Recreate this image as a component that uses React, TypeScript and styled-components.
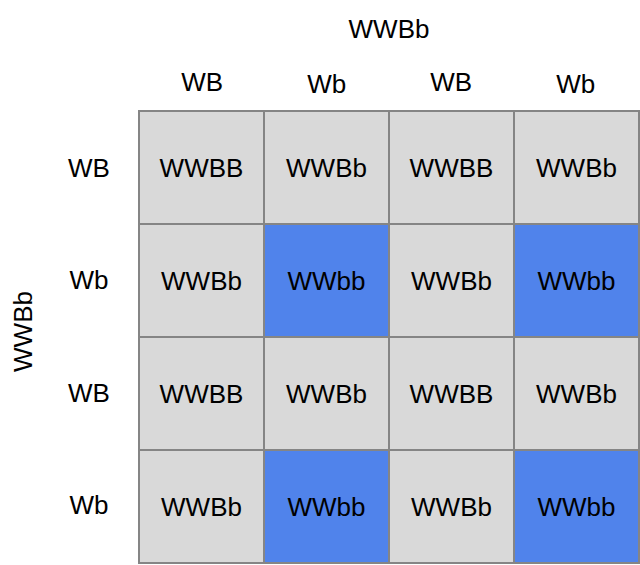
import React from 'react';
import { createGlobalStyle, styled } from 'styled-components';

const GlobalStyle = createGlobalStyle`
  html, body {
    margin: 0;
    padding: 0;
    background: #ffffff;
  }
  body {
    font-family: 'Liberation Sans', Arial, sans-serif;
    color: #000000;
  }
`;

const colAlleles = ['WB', 'Wb', 'WB', 'Wb'];
const rowAlleles = ['WB', 'Wb', 'WB', 'Wb'];

const combine = (a: string, b: string) => {
  const w = [a[0], b[0]].sort().join('');
  const bb = [a[1], b[1]].sort().join('');
  return w + bb;
};

export default function App() {
  return (
    <>
      <GlobalStyle />
      <Page>
        <SideLabel>
          <Rotated>WWBb</Rotated>
        </SideLabel>
        <Square>
          <TopLabel>WWBb</TopLabel>
          <ColHeaders>
            {colAlleles.map((c, i) => (
              <ColHeader key={i} lower={c === 'Wb'}>
                {c}
              </ColHeader>
            ))}
          </ColHeaders>
          <RowHeaders>
            {rowAlleles.map((r, i) => (
              <RowHeader key={i}>{r}</RowHeader>
            ))}
          </RowHeaders>
          <Board>
            {rowAlleles.map((r, ri) =>
              colAlleles.map((c, ci) => {
                const g = combine(r, c);
                return (
                  <Cell key={`${ri}-${ci}`} recessive={g === 'WWbb'}>
                    {g}
                  </Cell>
                );
              })
            )}
          </Board>
        </Square>
      </Page>
    </>
  );
}

const Page = styled.div`
  display: flex;
  width: 640px;
  height: 565px;
  overflow: hidden;
`;

const SideLabel = styled.div`
  width: 46px;
  padding-top: 98px;
  display: flex;
  align-items: center;
  justify-content: center;
`;

const Rotated = styled.div`
  transform: rotate(-90deg);
  font-size: 26px;
  white-space: nowrap;
`;

const Square = styled.div`
  display: grid;
  grid-template-columns: 92px 502px;
  grid-template-rows: 56px 54px 454px;
`;

const TopLabel = styled.div`
  grid-column: 2;
  grid-row: 1;
  display: flex;
  align-items: center;
  justify-content: center;
  font-size: 26px;
  padding-top: 2px;
`;

const ColHeaders = styled.div`
  grid-column: 2;
  grid-row: 2;
  display: grid;
  grid-template-columns: repeat(4, 1fr);
  padding: 0 2px;
`;

const ColHeader = styled.div<{ lower?: boolean }>`
  display: flex;
  align-items: center;
  justify-content: center;
  font-size: 26px;
  padding-top: ${(p) => (p.lower ? '4px' : '0')};
  padding-bottom: 2px;
`;

const RowHeaders = styled.div`
  grid-column: 1;
  grid-row: 3;
  display: grid;
  grid-template-rows: repeat(4, 1fr);
  padding: 2px 0;
`;

const RowHeader = styled.div`
  display: flex;
  align-items: center;
  justify-content: center;
  font-size: 26px;
  padding-right: 6px;
`;

const Board = styled.div`
  grid-column: 2;
  grid-row: 3;
  display: grid;
  grid-template-columns: repeat(4, 1fr);
  grid-template-rows: repeat(4, 1fr);
  gap: 2px;
  border: 2px solid #858585;
  background: #858585;
`;

const Cell = styled.div<{ recessive?: boolean }>`
  display: flex;
  align-items: center;
  justify-content: center;
  background: ${(p) => (p.recessive ? '#5083eb' : '#d9d9d9')};
  font-size: 26px;
  padding-top: 2px;
`;
